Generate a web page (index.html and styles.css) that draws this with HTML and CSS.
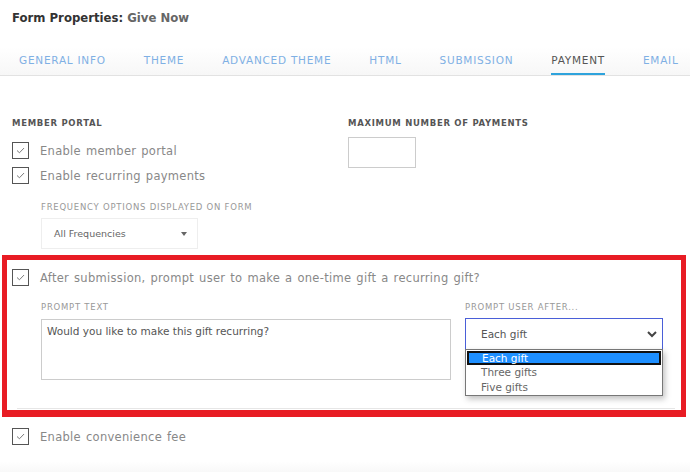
FILE: index.html
```html
<!DOCTYPE html>
<html>
<head lang="en">
  <meta charset="UTF-8">
  <title>Form Properties</title>
  <link rel="stylesheet" href="styles.css">
</head>
<body>
<div class="page-title">Form Properties: <span>Give Now</span></div>

<div class="tabs">
  <a href="javascript:void(0);" class="tab">General Info</a>
  <a href="javascript:void(0);" class="tab">Theme</a>
  <a href="javascript:void(0);" class="tab">Advanced Theme</a>
  <a href="javascript:void(0);" class="tab">HTML</a>
  <a href="javascript:void(0);" class="tab">Submission</a>
  <a href="javascript:void(0);" class="tab tab-active">Payment</a>
  <a href="javascript:void(0);" class="tab">Email</a>
</div>

<div class="payment">
  <div class="cols">
    <div class="col-left">
      <div class="section-label">Member Portal</div>
      <label class="check-row"><span class="check"><svg viewBox="0 0 10 8" width="9" height="7"><path d="M1 4 L3.8 6.6 L9 1.2" fill="none" stroke="#666" stroke-width="1"/></svg></span>Enable member portal</label>
      <label class="check-row"><span class="check"><svg viewBox="0 0 10 8" width="9" height="7"><path d="M1 4 L3.8 6.6 L9 1.2" fill="none" stroke="#666" stroke-width="1"/></svg></span>Enable recurring payments</label>
      <div class="sub-field">
        <div class="field-label">Frequency options displayed on form</div>
        <div class="freq-select">All Frequencies <span class="caret"></span></div>
      </div>
    </div>
    <div class="col-right">
      <div class="section-label">Maximum number of payments</div>
      <div class="num-input"></div>
    </div>
  </div>

  <div class="highlight">
    <label class="check-row"><span class="check"><svg viewBox="0 0 10 8" width="9" height="7"><path d="M1 4 L3.8 6.6 L9 1.2" fill="none" stroke="#666" stroke-width="1"/></svg></span>After submission, prompt user to make a one-time gift a recurring gift?</label>
    <div class="prompt-row">
      <div class="prompt-text">
        <div class="field-label">Prompt text</div>
        <div class="textarea">Would you like to make this gift recurring?</div>
      </div>
      <div class="prompt-after">
        <div class="field-label">Prompt user after...</div>
        <div class="after-select">Each gift
          <svg class="chevron" viewBox="0 0 10 7" width="10" height="7"><path d="M1 1 L5 5 L9 1" fill="none" stroke="#444" stroke-width="2"/></svg>
        </div>
        <ul class="options">
          <li class="option-on">Each gift</li>
          <li>Three gifts</li>
          <li>Five gifts</li>
        </ul>
      </div>
    </div>
    <div class="divider"></div>
  </div>

  <label class="check-row fee-row"><span class="check"><svg viewBox="0 0 10 8" width="9" height="7"><path d="M1 4 L3.8 6.6 L9 1.2" fill="none" stroke="#666" stroke-width="1"/></svg></span>Enable convenience fee</label>
</div>
<div class="foot"></div>
</body>
</html>
```
FILE: styles.css
```css
body {
  margin: 0;
  width: 690px;
  height: 472px;
  overflow: hidden;
  background: #ffffff;
  font-family: "DejaVu Sans", "Open Sans", sans-serif;
  color: #555;
}

.page-title {
  padding: 10px 0 0 12px;
  height: 16px;
  line-height: 16px;
  font-size: 11.7px;
  font-weight: bold;
  color: #333;
}

.page-title span {
  color: #666;
}

.tabs {
  display: flex;
  margin-top: 21px;
  height: 28px;
  background: linear-gradient(#ffffff, #f7f7f7);
  border-bottom: 1px solid #e2e2e2;
}

.tab {
  display: block;
  flex-shrink: 0;
  white-space: nowrap;
  padding: 1px 19px 0 19px;
  line-height: 25px;
  font-size: 10.5px;
  letter-spacing: 0.75px;
  text-transform: uppercase;
  text-decoration: none;
  color: #7fb0e4;
  border-bottom: 2px solid transparent;
}

.tab-active {
  color: #555;
  border-bottom-color: #2ea3dc;
  margin: 0 19px;
  padding: 1px 0 0 0;
}

.cols {
  display: flex;
  padding: 40px 0 0 12px;
}

.col-left {
  width: 336px;
}

.section-label {
  height: 14px;
  line-height: 14px;
  padding-bottom: 4px;
  font-size: 8.5px;
  font-weight: bold;
  letter-spacing: 0.7px;
  text-transform: uppercase;
  color: #555;
}

.check-row {
  display: flex;
  align-items: center;
  height: 17px;
  margin-top: 8px;
  font-size: 11.5px;
  letter-spacing: 0.3px;
  word-spacing: 1px;
  color: #888;
}

.check {
  display: flex;
  align-items: center;
  justify-content: center;
  width: 15px;
  height: 15px;
  margin-right: 11px;
  border: 1px solid #555;
}

.sub-field {
  padding: 17px 0 0 29px;
}

.field-label {
  height: 12px;
  line-height: 12px;
  font-size: 8.5px;
  letter-spacing: 0.75px;
  text-transform: uppercase;
  color: #999;
}

.freq-select {
  position: relative;
  box-sizing: border-box;
  width: 157px;
  height: 31px;
  margin-top: 5px;
  padding-left: 12px;
  line-height: 29px;
  font-size: 9.5px;
  color: #666;
  border: 1px solid #eeeeee;
}

.caret {
  position: absolute;
  right: 10px;
  top: 13px;
  border-left: 3px solid transparent;
  border-right: 3px solid transparent;
  border-top: 4px solid #666;
}

.num-input {
  box-sizing: border-box;
  width: 68px;
  height: 31px;
  margin-top: 3px;
  border: 1px solid #cccccc;
}

.highlight {
  box-sizing: border-box;
  width: 684px;
  height: 162px;
  margin: 6px 0 0 2px;
  padding: 9px 0 0 5px;
  border: 5px solid #e81c24;
  border-bottom-width: 7px;
}

.highlight .check-row {
  margin-top: 0;
}

.prompt-row {
  display: flex;
  margin-top: 15px;
  padding-left: 29px;
}

.prompt-text {
  width: 424px;
}

.textarea {
  box-sizing: border-box;
  width: 410px;
  height: 61px;
  margin-top: 6px;
  padding: 5px 5px;
  font-size: 10.5px;
  color: #555;
  border: 1px solid #cccccc;
}

.prompt-after {
  position: relative;
  width: 198px;
}

.after-select {
  position: relative;
  box-sizing: border-box;
  width: 198px;
  height: 32px;
  margin-top: 5px;
  padding-left: 15px;
  line-height: 30px;
  font-size: 10.5px;
  color: #555;
  border: 1px solid #4a5fd8;
}

.chevron {
  position: absolute;
  right: 5px;
  top: 12px;
}

.options {
  position: absolute;
  left: 0;
  top: 48px;
  box-sizing: border-box;
  width: 198px;
  margin: 0;
  padding: 1px 0 0 0;
  list-style: none;
  background: #ffffff;
  border: 1px solid #777;
  box-shadow: 2px 3px 6px rgba(0, 0, 0, 0.25);
  font-size: 10.5px;
  color: #666;
}

.options li {
  height: 15px;
  line-height: 15px;
  padding-left: 15px;
}

.options .option-on {
  box-sizing: border-box;
  height: 14px;
  margin: 0 1px;
  padding-left: 13px;
  line-height: 10px;
  background: #1e8fff;
  color: #ffffff;
  border: 2px solid #111;
}

.divider {
  width: 658px;
  margin: 28px 0 0 5px;
  border-top: 1px solid #e6e6e6;
}

.fee-row {
  margin: 11px 0 0 12px;
}

.foot {
  height: 12px;
  margin-top: 16px;
  background: linear-gradient(#ffffff, #f8f8f8);
}
```
